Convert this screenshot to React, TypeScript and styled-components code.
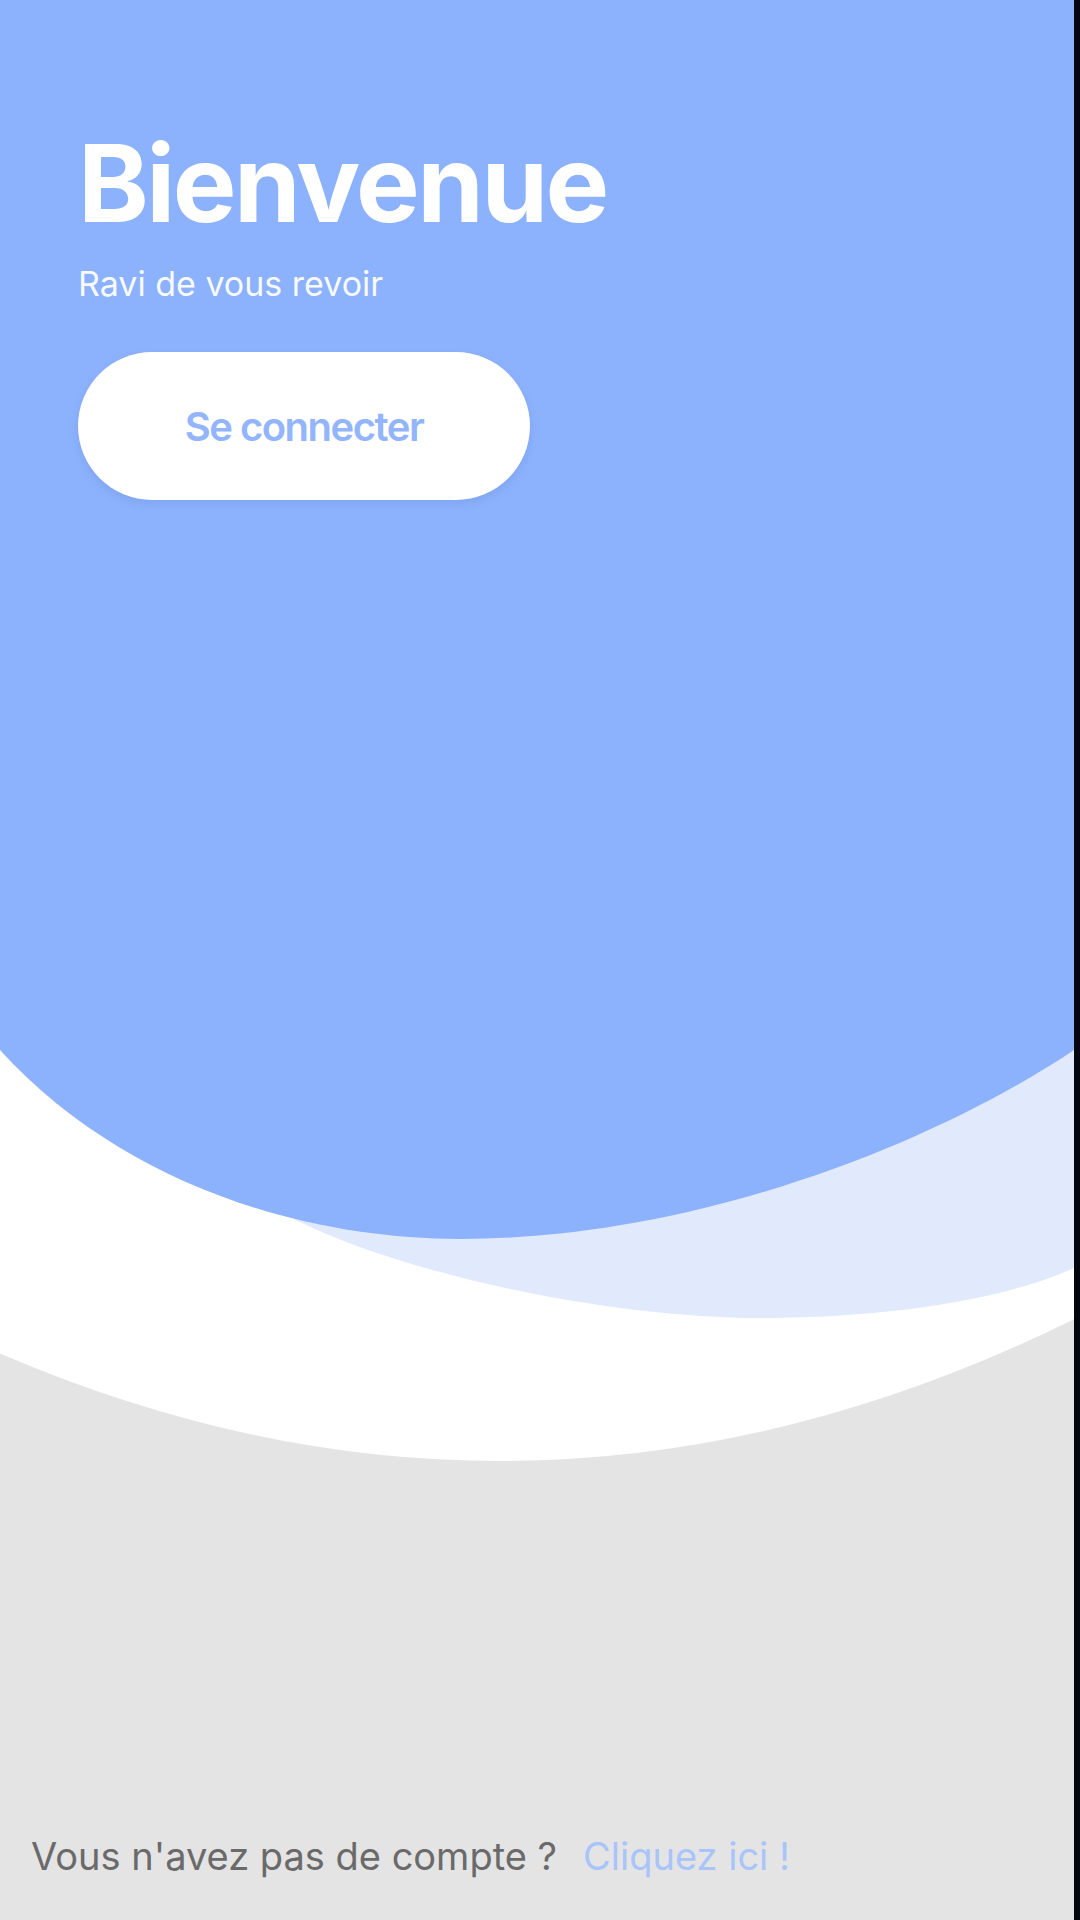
import React from "react";
import styled, { createGlobalStyle } from "styled-components";

const GlobalStyle = createGlobalStyle`
  html, body {
    margin: 0;
    padding: 0;
    background: #04060f;
  }
  body {
    font-family: "Inter", "Noto Sans", "Liberation Sans", sans-serif;
    -webkit-font-smoothing: antialiased;
  }
  * { box-sizing: border-box; }
`;

const PAGE_W = 1074;
const PAGE_H = 1920;

const Page = styled.main`
  position: relative;
  width: ${PAGE_W}px;
  min-height: ${PAGE_H}px;
  background: #e4e4e4;
  overflow: hidden;
  display: flex;
  flex-direction: column;
`;

const Backdrop = styled.svg`
  position: absolute;
  inset: 0;
  width: 100%;
  height: 100%;
  pointer-events: none;
`;

const Content = styled.div`
  position: relative;
  z-index: 1;
  flex: 1;
  display: flex;
  flex-direction: column;
  justify-content: space-between;
`;

const Hero = styled.section`
  display: flex;
  flex-direction: column;
  align-items: flex-start;
  padding: 130px 0 0 78px;
`;

const Title = styled.h1`
  margin: 0;
  font-family: "Inter", "Liberation Sans", sans-serif;
  font-weight: 700;
  font-size: 107px;
  line-height: 107px;
  letter-spacing: -2.5px;
  color: #ffffff;
`;

const Subtitle = styled.p`
  margin: 30px 0 0 0;
  font-family: "Inter", "Liberation Sans", sans-serif;
  font-weight: 400;
  font-size: 34px;
  line-height: 34px;
  letter-spacing: 0;
  color: rgba(255, 255, 255, 0.95);
`;

const PrimaryButton = styled.button`
  margin-top: 51px;
  width: 452px;
  height: 148px;
  border: none;
  border-radius: 74px;
  background: #ffffff;
  box-shadow: 0 4px 10px rgba(40, 70, 140, 0.12);
  display: flex;
  align-items: center;
  justify-content: center;
  font-family: "Inter", "Liberation Sans", sans-serif;
  font-weight: 600;
  font-size: 40px;
  letter-spacing: -1.5px;
  color: #92b5fd;
  cursor: pointer;
`;

const Footer = styled.footer`
  display: flex;
  align-items: baseline;
  gap: 26px;
  padding: 0 0 45px 31px;
  font-family: "Inter", "Liberation Sans", sans-serif;
  font-size: 38px;
  line-height: 38px;
  letter-spacing: 0;
`;

const FooterText = styled.span<{ $accent?: boolean }>`
  color: ${(p) => (p.$accent ? "#a9c4fb" : "#6a6a6a")};
`;

const whitePath = `M0 0 L0 1353.5 Q537 1584.4 ${PAGE_W} 1319.3 L${PAGE_W} 0 Z`;
const lightPath = `M0 0 H${PAGE_W} V1268 C990 1306 860 1318 761 1318 C600 1318 390 1270 288 1216 L340 1170 L0 950 Z`;
const bluePath = `M0 0 H${PAGE_W} V1050 C940 1140 700 1239 460 1239 C300 1239 120 1182 0 1050 Z`;

export default function App() {
  return (
    <>
      <GlobalStyle />
      <Page>
        <Backdrop viewBox={`0 0 ${PAGE_W} ${PAGE_H}`} preserveAspectRatio="none" aria-hidden>
          <path d={whitePath} fill="#ffffff" />
          <path d={lightPath} fill="#e1eafd" />
          <path d={bluePath} fill="#8db2fd" />
        </Backdrop>
        <Content>
          <Hero>
            <Title>Bienvenue</Title>
            <Subtitle>Ravi de vous revoir</Subtitle>
            <PrimaryButton type="button">Se connecter</PrimaryButton>
          </Hero>
          <Footer>
            <FooterText>Vous n'avez pas de compte ?</FooterText>
            <FooterText $accent>Cliquez ici !</FooterText>
          </Footer>
        </Content>
      </Page>
    </>
  );
}
